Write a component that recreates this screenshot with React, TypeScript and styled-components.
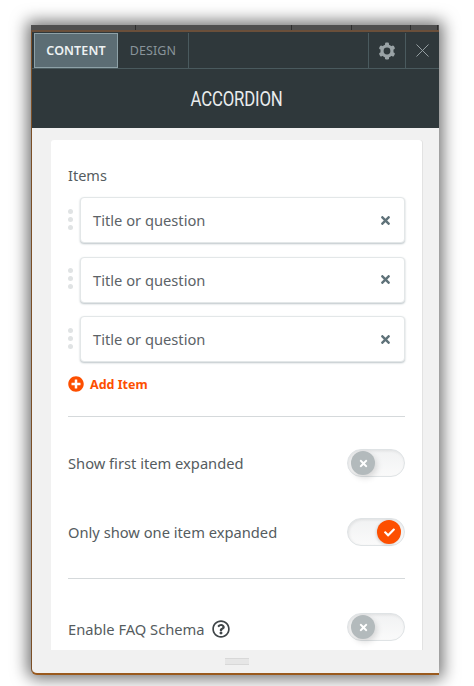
import styled, { createGlobalStyle } from 'styled-components'
import { FaCheck, FaPlusCircle, FaRegQuestionCircle, FaTimes } from 'react-icons/fa'
import { X } from 'lucide-react'

const Global = createGlobalStyle`
  html, body { margin: 0; padding: 0; background: #fff; }
  body { font-family: "Noto Sans", "Open Sans", sans-serif; }
`

const Page = styled.div`
  width: 474px; height: 686px; box-sizing: border-box; overflow: hidden;
  padding: 25px 35px 11px 31px;
`
const Window = styled.div`
  width: 408px; height: 650px; display: flex; flex-direction: column;
  background: #f1f1f1; border-radius: 0 0 0 6px;
  border-left: 1px solid #7b4f26; border-bottom: 2px solid #9a5a1e;
  box-sizing: border-box;
  box-shadow: 0 0 16px 4px rgba(0, 0, 0, 0.55);
`
const BackStrip = styled.div`
  height: 7px; flex: none; display: flex; margin-left: -1px;
  background: #4f4f4f; border-bottom: 2px solid #6a4f3a; box-sizing: border-box;
`
const StripCell = styled.div<{ $w: number }>`
  width: ${p => p.$w}px; height: 5px; box-sizing: border-box;
  border-right: 1px solid #2e2e2e;
`
const Header = styled.header`
  flex: none; height: 96px; background: #2f383b; display: flex; flex-direction: column;
`
const TabBar = styled.div`
  height: 37px; flex: none; box-sizing: border-box; display: flex; padding-top: 1px;
  padding-left: 2px; border-bottom: 1px solid #4a5a5e;
`
const Tab = styled.div<{ $active?: boolean }>`
  height: 35px; box-sizing: border-box; display: flex; align-items: center; justify-content: center;
  font-size: 12.5px; letter-spacing: 0.1px;
  width: ${p => (p.$active ? 84 : 71)}px;
  font-weight: ${p => (p.$active ? 600 : 400)};
  color: ${p => (p.$active ? '#eef2f3' : '#89949a')};
  background: ${p => (p.$active ? '#5c6d74' : 'transparent')};
  border: ${p => (p.$active ? '1px solid #8ea1a7' : 'none')};
  border-right: ${p => (p.$active ? '1px solid #8ea1a7' : '1px solid #4a5a5e')};
`
const Spacer = styled.div`flex: 1;`
const ToolButton = styled.div<{ $w: number }>`
  width: ${p => p.$w}px; height: 35px; box-sizing: border-box; flex: none;
  display: flex; align-items: center; justify-content: center; color: #9aa3a6;
  border-left: 1px solid #4a5a5e;
`
const Title = styled.h1`
  flex: 1; margin: 0; padding: 2px 0 0 2px; box-sizing: border-box; display: flex;
  align-items: center; justify-content: center;
  font-family: Roboto, sans-serif; font-size: 19.5px; font-weight: 400; color: #e9eced;
`
const TitleText = styled.span`
  display: inline-block; transform: scaleX(0.86); letter-spacing: -0.2px;
`
const Body = styled.div`
  flex: 1; min-height: 0; padding: 12px 17px 0 19px; display: flex; flex-direction: column;
`
const Card = styled.section`
  height: 510px; flex: none; box-sizing: border-box; background: #fff;
  padding: 25px 17px 0 17px; border-radius: 3px 3px 0 0; box-shadow: 1px 0 0 #e2e2e2;
`
const Label = styled.div`
  font-size: 14.5px; line-height: 20px; color: #555c60;
`
const ItemList = styled.div`
  display: flex; flex-direction: column; gap: 13.5px; margin-top: 12px;
`
const ItemRow = styled.div`
  display: flex; align-items: center; gap: 7px; height: 46px;
`
const Grip = styled.div`
  width: 5px; display: flex; flex-direction: column; gap: 3px; margin-top: -2px;
`
const GripDot = styled.span`
  width: 5px; height: 5px; border-radius: 50%; background: #e0e3e4;
`
const ItemBox = styled.div`
  flex: 1; height: 46px; box-sizing: border-box; display: flex; align-items: center;
  justify-content: space-between; padding: 0 12px 0 12px; background: #fff;
  border: 1px solid #e3e7e8; border-radius: 4px;
  box-shadow: 0 1px 2px rgba(90, 110, 120, 0.4);
  font-size: 14.7px; color: #5c6367;
`
const RemoveIcon = styled.span`
  display: flex; color: #5f7279;
`
const AddItem = styled.div`
  display: flex; align-items: center; gap: 6px; margin-top: 13px; height: 18px;
  font-size: 12.5px; font-weight: 700; color: #fd4f00;
`
const Divider = styled.hr<{ $top: number; $bottom: number }>`
  border: 0; height: 1px; background: #d5d9db;
  margin: ${p => p.$top}px 0 ${p => p.$bottom}px;
`
const SettingRow = styled.div<{ $gap?: number }>`
  display: flex; align-items: center; justify-content: space-between; height: 28px;
  margin-top: ${p => p.$gap ?? 0}px;
`
const SettingLabel = styled.div<{ $drop?: number }>`
  display: flex; align-items: center; gap: 7px; font-size: 14.7px; color: #555c60;
  padding-top: ${p => p.$drop ?? 0}px;
`
const Switch = styled.div`
  position: relative; width: 58px; height: 28px; box-sizing: border-box; flex: none;
  border-radius: 14px; background: linear-gradient(#f1f2f3, #fafafa);
  border: 1px solid #dfe3e5;
  box-shadow: inset 1px 1px 3px rgba(0, 0, 0, 0.08);
`
const Knob = styled.span<{ $on?: boolean }>`
  position: absolute; top: 1px; ${p => (p.$on ? 'right: 3px;' : 'left: 3px;')}
  width: 24px; height: 24px; border-radius: 50%; color: #fff;
  display: flex; align-items: center; justify-content: center;
  background: ${p => (p.$on ? '#fd4f00' : '#b3babc')};
  box-shadow: ${p => (p.$on ? '-1px 1px 3px' : '2px 3px 6px')} rgba(0, 0, 0, 0.14);
`
const Footer = styled.div`
  flex: 1; display: flex; align-items: center; justify-content: center;
`
const Handle = styled.div`
  width: 24px; height: 5px; margin-top: -1px; border-top: 1px solid #d8d8d8; border-bottom: 1px solid #d8d8d8;
  background: #e6e6e6;
`

const strip = [105, 156, 60, 59, 27]
const teeth = [0, 60, 120, 180, 240, 300]

function Gear() {
  return (
    <svg width="18" height="18" viewBox="0 0 18 18" fill="none">
      <circle cx="9" cy="9" r="5" stroke="currentColor" strokeWidth="3.2" />
      {teeth.map(a => (
        <rect key={a} x="7" y="0.6" width="4" height="4" rx="1.2" fill="currentColor" transform={`rotate(${a} 9 9)`} />
      ))}
    </svg>
  )
}

function Item() {
  return (
    <ItemRow>
      <Grip>
        <GripDot />
        <GripDot />
        <GripDot />
      </Grip>
      <ItemBox>
        Title or question
        <RemoveIcon><FaTimes size={13} /></RemoveIcon>
      </ItemBox>
    </ItemRow>
  )
}

export default function App() {
  return (
    <Page>
      <Global />
      <Window>
        <BackStrip>
          {strip.map((w, i) => <StripCell key={i} $w={w} />)}
        </BackStrip>
        <Header>
          <TabBar>
            <Tab $active>CONTENT</Tab>
            <Tab>DESIGN</Tab>
            <Spacer />
            <ToolButton $w={37}><Gear /></ToolButton>
            <ToolButton $w={34}><X size={23} strokeWidth={1} /></ToolButton>
          </TabBar>
          <Title><TitleText>ACCORDION</TitleText></Title>
        </Header>
        <Body>
          <Card>
            <Label>Items</Label>
            <ItemList>
              <Item />
              <Item />
              <Item />
            </ItemList>
            <AddItem><FaPlusCircle size={16} />Add Item</AddItem>
            <Divider $top={23} $bottom={32} />
            <SettingRow>
              <SettingLabel>Show first item expanded</SettingLabel>
              <Switch><Knob><FaTimes size={11} /></Knob></Switch>
            </SettingRow>
            <SettingRow $gap={41}>
              <SettingLabel>Only show one item expanded</SettingLabel>
              <Switch><Knob $on><FaCheck size={11} /></Knob></Switch>
            </SettingRow>
            <Divider $top={32} $bottom={34} />
            <SettingRow>
              <SettingLabel $drop={3}>Enable FAQ Schema <FaRegQuestionCircle size={18} color="#3f4548" /></SettingLabel>
              <Switch><Knob><FaTimes size={11} /></Knob></Switch>
            </SettingRow>
          </Card>
          <Footer><Handle /></Footer>
        </Body>
      </Window>
    </Page>
  )
}
